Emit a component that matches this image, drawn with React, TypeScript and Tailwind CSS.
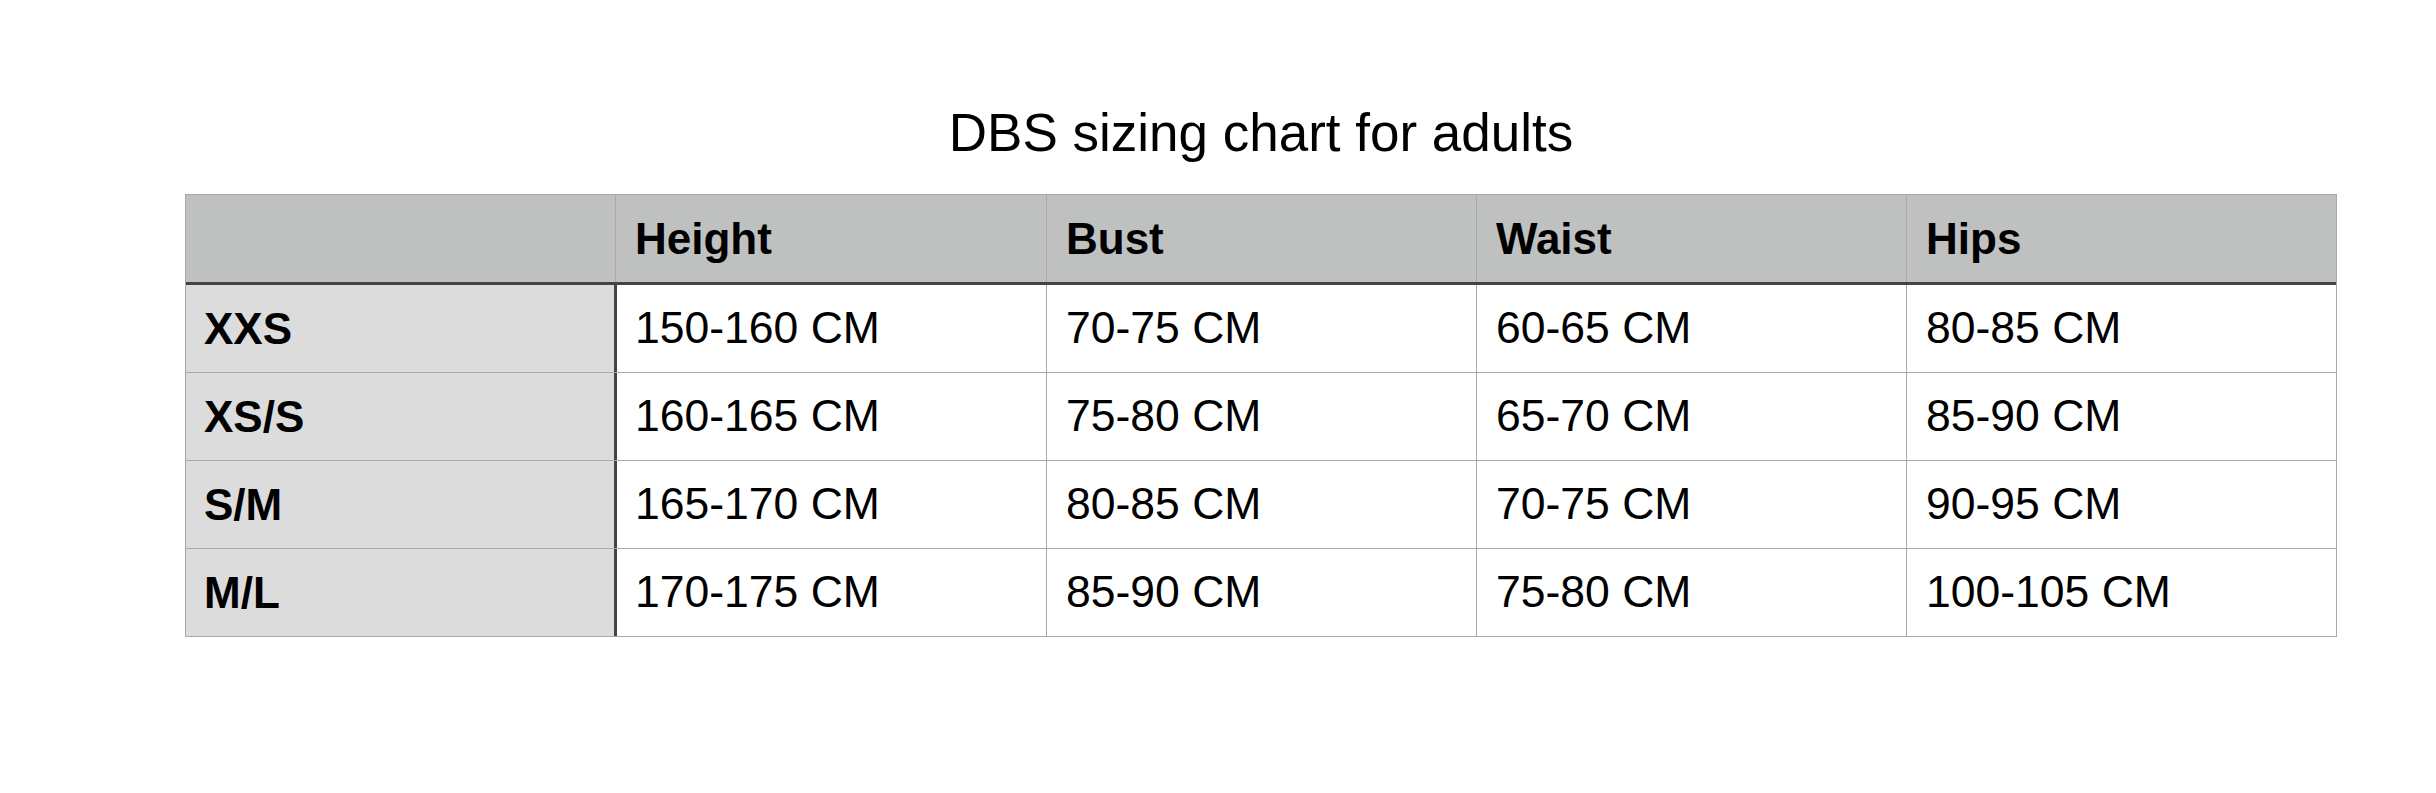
import React from 'react';

const ROWS = [
  { size: 'XXS', height: '150-160 CM', bust: '70-75 CM', waist: '60-65 CM', hips: '80-85 CM' },
  { size: 'XS/S', height: '160-165 CM', bust: '75-80 CM', waist: '65-70 CM', hips: '85-90 CM' },
  { size: 'S/M', height: '165-170 CM', bust: '80-85 CM', waist: '70-75 CM', hips: '90-95 CM' },
  { size: 'M/L', height: '170-175 CM', bust: '85-90 CM', waist: '75-80 CM', hips: '100-105 CM' },
];

const HEADERS = ['Height', 'Bust', 'Waist', 'Hips'];

export default function App() {
  return (
    <div className="min-h-screen w-full bg-white text-black font-['Liberation_Sans',Arial,sans-serif]">
      <div className="ml-[185px] w-[2152px] pt-[103px]">
        <h1 className="text-center text-[53px] leading-[60px] font-normal">DBS sizing chart for adults</h1>

        <div className="mt-[31px] border border-[#a9a9a9]">
          {/* header */}
          <div className="grid h-[90px] grid-cols-[429px_431px_430px_430px_430px] border-b-[3px] border-[#444444] bg-[#bfc1c0]">
            <div />
            {HEADERS.map((h) => (
              <div key={h} className="flex items-center border-l border-[#a9a9a9] pl-[19px] text-[44px] font-bold">
                {h}
              </div>
            ))}
          </div>

          {/* body */}
          {ROWS.map((r, i) => (
            <div
              key={r.size}
              className={`grid grid-cols-[428px_432px_430px_430px_430px] text-[44.5px] ${
                i > 0 ? 'h-[88px] border-t border-[#a9a9a9]' : 'h-[87px]'
              }`}
            >
              <div className="flex items-center bg-[#dcdcdc] pl-[18px] text-[44px] font-bold">{r.size}</div>
              <div className="flex items-center border-l-[3px] border-[#444444] pl-[18px]">{r.height}</div>
              <div className="flex items-center border-l border-[#a9a9a9] pl-[19px]">{r.bust}</div>
              <div className="flex items-center border-l border-[#a9a9a9] pl-[19px]">{r.waist}</div>
              <div className="flex items-center border-l border-[#a9a9a9] pl-[19px]">{r.hips}</div>
            </div>
          ))}
        </div>
      </div>
    </div>
  );
}
